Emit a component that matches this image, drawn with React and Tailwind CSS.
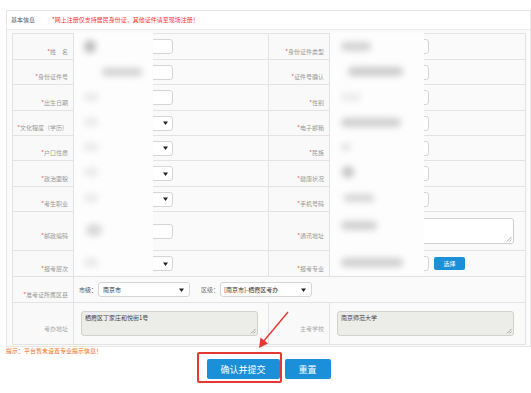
import React from "react";

const FONT = "font-['Noto_Sans_CJK_SC','Liberation_Sans',sans-serif]";

function Label({ text, req = true, light = false }) {
  return (
    <td className="border border-[#e3e3e3] bg-[#f9f9f9] pr-[5px] text-right align-middle">
      <span className={`text-[6px] leading-none ${light ? "text-[#aaa]" : "text-[#999]"}`}>
        {req && <span className="text-[#f55]">*</span>}
        {text}
      </span>
    </td>
  );
}

function Arrow() {
  return (
    <svg width="5" height="4" viewBox="0 0 5 4" className="shrink-0">
      <path d="M0 0.5h5L2.5 4z" fill="#222" />
    </svg>
  );
}

function Grip() {
  return (
    <svg width="6" height="6" viewBox="0 0 6 6" className="absolute bottom-[1px] right-[1px]">
      <path d="M5.5 1L1 5.5M5.5 3.5L3.5 5.5" stroke="#999" strokeWidth="0.8" />
    </svg>
  );
}

function Field({ kind }) {
  if (kind === "select") {
    return (
      <div className="ml-[6px] flex h-[15px] w-[93px] items-center justify-end rounded-[3px] border border-[#d6d6d6] bg-white pr-[4px]">
        <Arrow />
      </div>
    );
  }
  if (kind === "area") {
    return (
      <div className="relative ml-[6px] h-[26px] w-[178px] rounded-[3px] border border-[#cfcfcf] bg-white">
        <Grip />
      </div>
    );
  }
  return <div className="ml-[6px] h-[15px] w-[93px] rounded-[3px] border border-[#d6d6d6] bg-white" />;
}

function Cell({ children }) {
  return <td className="border border-[#e3e3e3] bg-[#fafafa] align-middle">{children}</td>;
}

const rows = [
  { h: "h-[26px]", l: ["姓\u3000名", "input"], r: ["身份证件类型", "input"] },
  { h: "h-[25px]", l: ["身份证件号", "input"], r: ["证件号确认", "input"] },
  { h: "h-[26px]", l: ["出生日期", "input"], r: ["性别", "input"] },
  { h: "h-[24px]", l: ["文化程度（学历）", "select"], r: ["电子邮箱", "input"] },
  { h: "h-[25px]", l: ["户口性质", "select"], r: ["民族", "input"] },
  { h: "h-[26px]", l: ["政治面貌", "select"], r: ["健康状况", "input"] },
  { h: "h-[25px]", l: ["考生职业", "select"], r: ["手机号码", "input"] },
  { h: "h-[39px]", l: ["邮政编码", "input"], r: ["通讯地址", "area"] },
];

// blurred smudges, one per row of the hidden columns
const leftSmudges = [
  { h: "h-[26px]", blob: "ml-[10px] h-[13px] w-[12px] bg-[#bdbdbd]" },
  { h: "h-[25px]", blob: "ml-[28px] h-[8px] w-[40px] bg-[#d2d2d2]" },
  { h: "h-[26px]", blob: "ml-[10px] h-[8px] w-[14px] bg-[#e8e8e8]" },
  { h: "h-[24px]", blob: "ml-[10px] h-[8px] w-[14px] bg-[#e8e8e8]" },
  { h: "h-[25px]", blob: "ml-[10px] h-[8px] w-[14px] bg-[#e8e8e8]" },
  { h: "h-[26px]", blob: "ml-[10px] h-[8px] w-[14px] bg-[#e8e8e8]" },
  { h: "h-[25px]", blob: "ml-[10px] h-[8px] w-[14px] bg-[#e8e8e8]" },
  { h: "h-[39px]", blob: "ml-[12px] h-[12px] w-[16px] bg-[#d8d8d8]" },
  { h: "h-[26px]", blob: "ml-[10px] h-[9px] w-[14px] bg-[#e8e8e8]" },
];

const rightSmudges = [
  { h: "h-[26px]", blob: "ml-[11px] h-[9px] w-[30px] bg-[#d2d2d2]" },
  { h: "h-[25px]", blob: "ml-[18px] h-[9px] w-[55px] bg-[#cbcbcb]" },
  { h: "h-[26px]", blob: "ml-[11px] h-[8px] w-[20px] bg-[#ebebeb]" },
  { h: "h-[24px]", blob: "ml-[11px] h-[9px] w-[60px] bg-[#cfcfcf]" },
  { h: "h-[25px]", blob: "ml-[11px] h-[8px] w-[10px] bg-[#e4e4e4]" },
  { h: "h-[26px]", blob: "ml-[12px] h-[12px] w-[12px] bg-[#c4c4c4]" },
  { h: "h-[25px]", blob: "ml-[14px] h-[8px] w-[30px] bg-[#d6d6d6]" },
  { h: "h-[39px]", blob: "ml-[11px] h-[9px] w-[36px] bg-[#d0d0d0] -mt-[8px]" },
  { h: "h-[26px]", blob: "ml-[11px] h-[9px] w-[62px] bg-[#cfcfcf]" },
];

function Smudges({ items, className }) {
  return (
    <div className={`absolute top-0 flex h-[242px] flex-col bg-[#fdfdfd] ${className}`}>
      {items.map((item, i) => (
        <div key={i} className={`flex items-center ${item.h}`}>
          <div className={`rounded-full blur-[3px] ${item.blob}`} />
        </div>
      ))}
    </div>
  );
}

export default function App() {
  return (
    <div className={`relative h-[393px] w-[531px] overflow-hidden bg-white ${FONT}`}>
      <div className="ml-[6px] mt-[10px] w-[525px] border border-[#e6e6e6] bg-[#fbfbfb]">
        <div className="flex h-[19px] items-center border-b border-[#ececec] bg-white pl-[4px] text-[6px] leading-none">
          <span className="text-[#555]">基本信息</span>
          <span className="ml-[17px] text-[#f33]">*网上注册仅支持居民身份证，其他证件请至现场注册！</span>
        </div>
        <div className="relative mx-[5px] mb-[1px] mt-[3px]">
          <table className="w-[513px] table-fixed border-collapse">
            <colgroup>
              <col className="w-[61px]" />
              <col className="w-[195px]" />
              <col className="w-[61px]" />
              <col className="w-[196px]" />
            </colgroup>
            <tbody>
              {rows.map((row) => (
                <tr key={row.l[0]} className={row.h}>
                  <Label text={row.l[0]} />
                  <Cell>
                    <Field kind={row.l[1]} />
                  </Cell>
                  <Label text={row.r[0]} />
                  <Cell>
                    <Field kind={row.r[1]} />
                  </Cell>
                </tr>
              ))}
              <tr className="h-[26px]">
                <Label text="报考层次" />
                <Cell>
                  <Field kind="select" />
                </Cell>
                <Label text="报考专业" />
                <Cell>
                  <div className="flex items-center">
                    <Field kind="input" />
                    <div className="ml-[5px] flex h-[13px] w-[31px] items-center justify-center rounded-[2px] bg-[#1c8fd9] text-[6px] leading-none text-white">
                      选择
                    </div>
                  </div>
                </Cell>
              </tr>
              <tr className="h-[26px]">
                <Label text="准考证所属区县" />
                <td colSpan={3} className="border border-[#e3e3e3] bg-[#fafafa] align-middle">
                  <div className="flex items-center text-[6px] leading-none text-[#555]">
                    <span className="ml-[5px] w-[19px]">市级：</span>
                    <div className="flex h-[15px] w-[92px] items-center justify-between rounded-[3px] border border-[#d6d6d6] bg-white pl-[4px] pr-[5px] text-[#333]">
                      <span>南京市</span>
                      <Arrow />
                    </div>
                    <span className="ml-[11px] w-[19px] text-[#777]">区级：</span>
                    <div className="flex h-[15px] w-[92px] items-center justify-between rounded-[3px] border border-[#d6d6d6] bg-white pl-[3px] pr-[5px] text-[#333]">
                      <span>[南京市]-栖霞区考办</span>
                      <Arrow />
                    </div>
                  </div>
                </td>
              </tr>
              <tr className="h-[42px]">
                <Label text="考办地址" req={false} light />
                <Cell>
                  <div className="relative ml-[7px] h-[25px] w-[177px] rounded-[3px] border border-[#d2d2cc] bg-[#ececE8] px-[3px] pt-[3px] text-[6px] leading-none text-[#444]">
                    栖霞区丁家庄和悦街1号
                    <Grip />
                  </div>
                </Cell>
                <Label text="主考学校" req={false} light />
                <Cell>
                  <div className="relative ml-[7px] h-[25px] w-[177px] rounded-[3px] border border-[#d2d2cc] bg-[#ececE8] px-[3px] pt-[3px] text-[6px] leading-none text-[#444]">
                    南京师范大学
                    <Grip />
                  </div>
                </Cell>
              </tr>
            </tbody>
          </table>

          <Smudges items={leftSmudges} className="left-[62px] w-[79px]" />
          <Smudges items={rightSmudges} className="left-[318px] w-[94px]" />
        </div>
      </div>

      <div className="ml-[6px] flex h-[8px] items-center text-[6px] leading-none text-[#ee6a1f]">
        提示：平台暂未设置专业提示信息！
      </div>

      <div className="mt-[4px] flex justify-center gap-[5px] pl-[6px]">
        <div className="relative">
          <div className="flex h-[20px] w-[73px] items-center justify-center rounded-[2px] bg-[#1c8fd9] text-[9px] leading-none text-white">
            确认并提交
          </div>
          <div className="absolute -bottom-[4px] -left-[10px] -right-[2px] -top-[7px] rounded-[2px] border-2 border-[#e53935]" />
        </div>
        <div className="flex h-[20px] w-[46px] items-center justify-center rounded-[2px] bg-[#1c8fd9] text-[9px] leading-none text-white">
          重置
        </div>
      </div>

      <svg className="pointer-events-none absolute left-0 top-0" width="531" height="393">
        <line x1="288" y1="312" x2="263" y2="342" stroke="#e53935" strokeWidth="1.4" />
        <path d="M259 348L260.5 337.5L268 343.5z" fill="#e53935" />
      </svg>
    </div>
  );
}
